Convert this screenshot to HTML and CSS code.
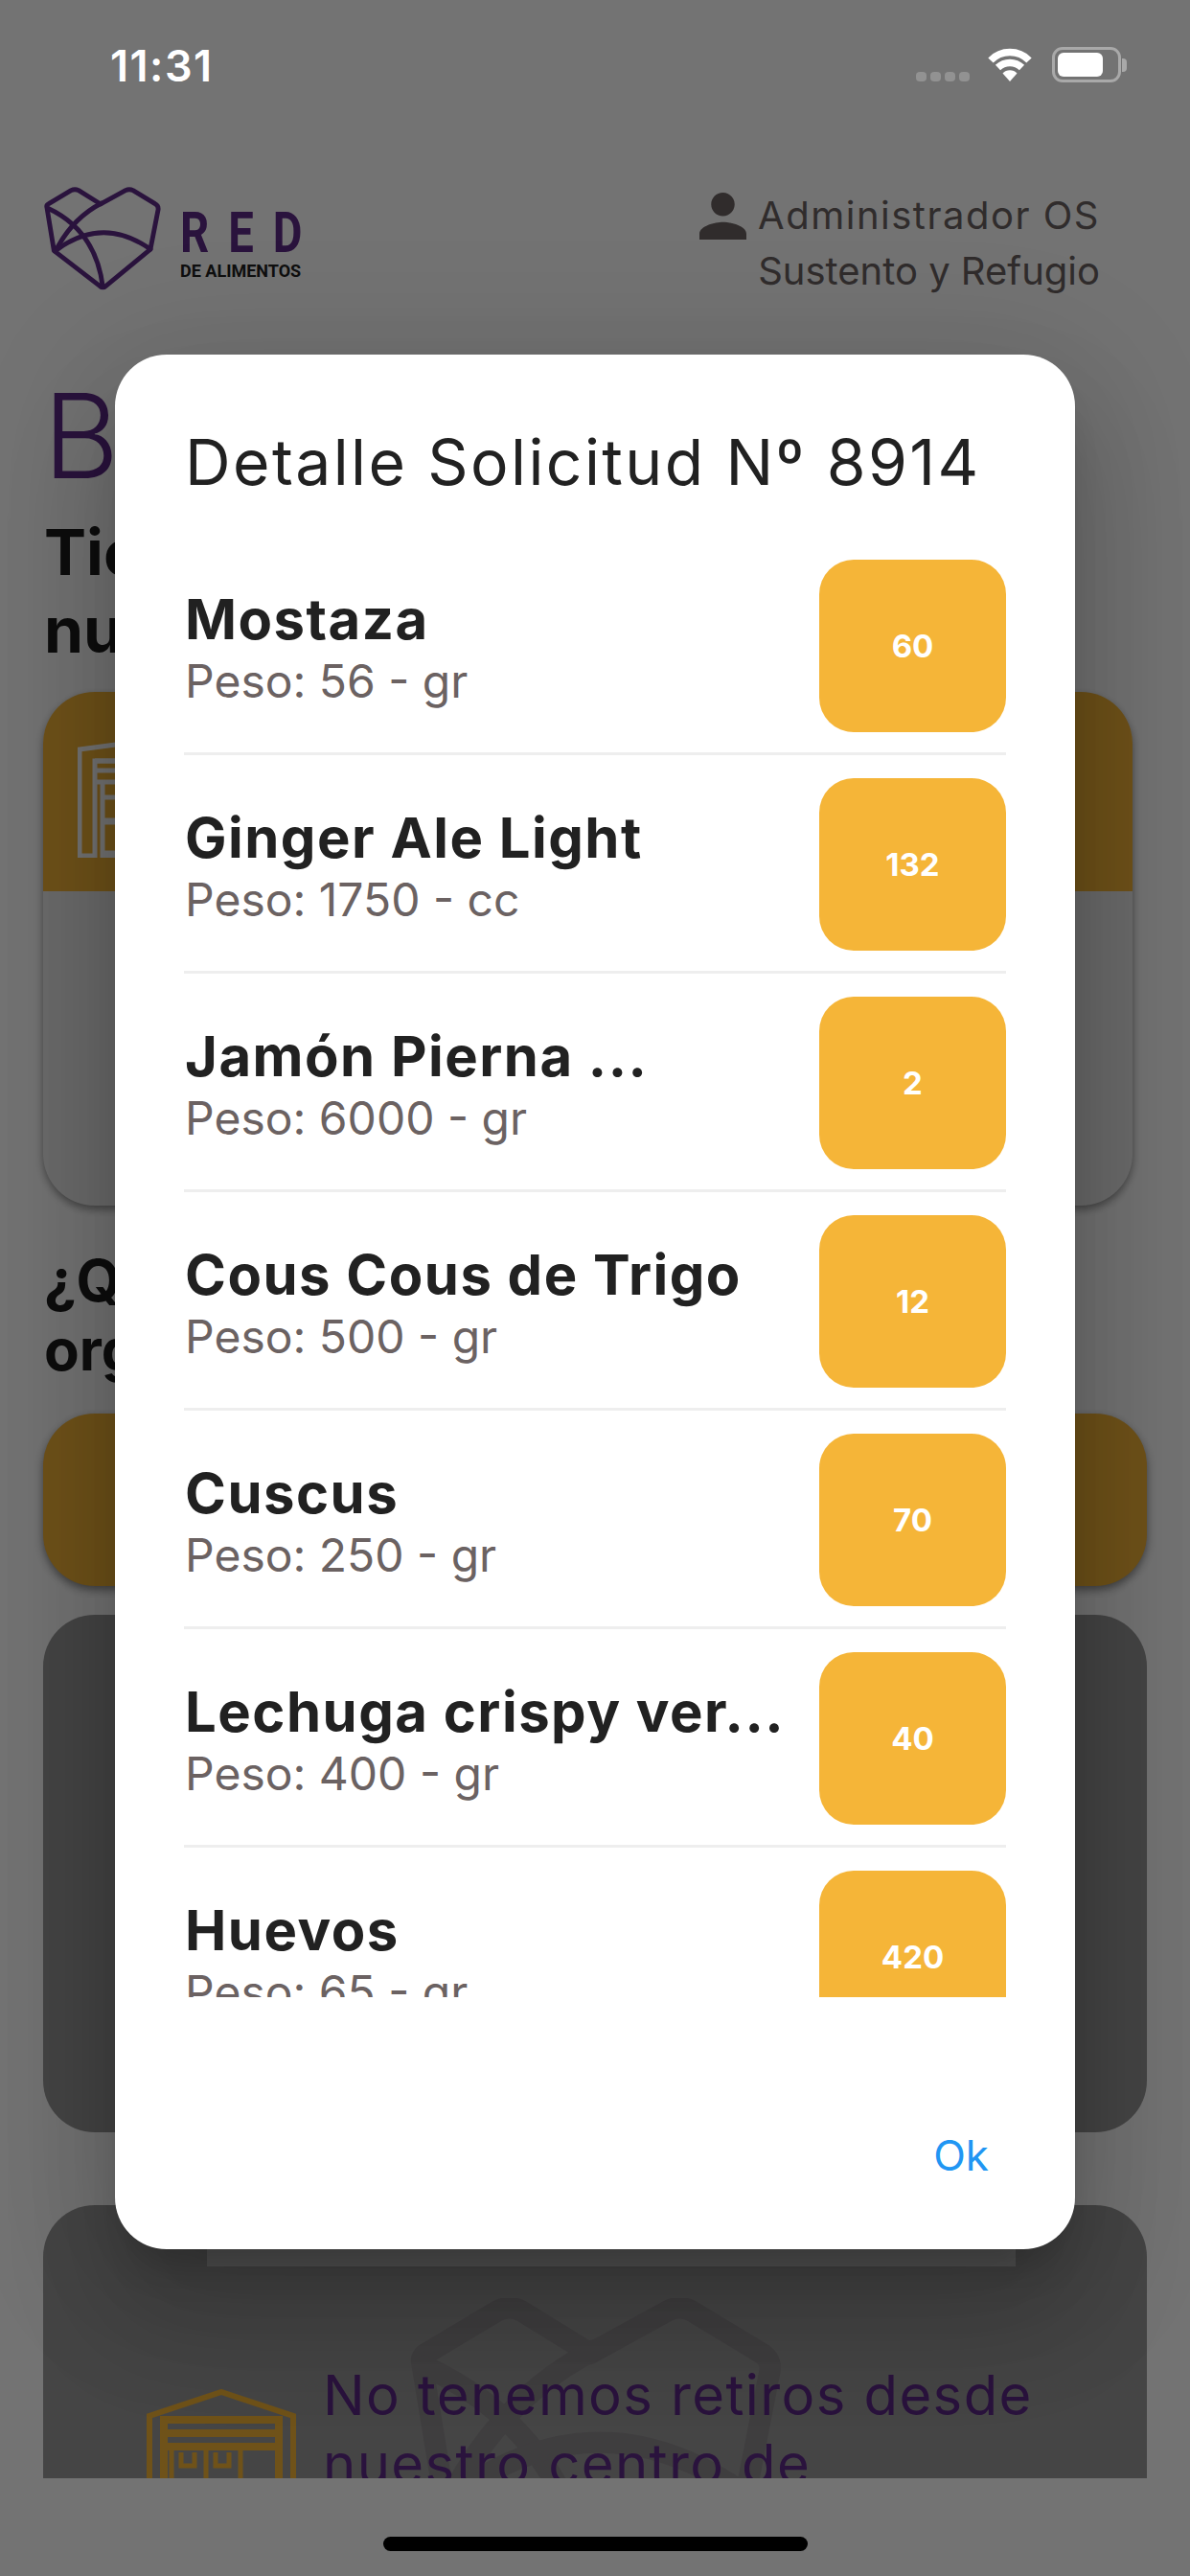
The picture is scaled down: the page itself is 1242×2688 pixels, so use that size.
FILE: index.html
```html
<!DOCTYPE html>
<html lang="es">
<head>
<meta charset="utf-8">
<title>Detalle Solicitud</title>
<link rel="stylesheet" href="styles.css">
</head>
<body>
<svg class="defs" width="0" height="0" aria-hidden="true">
  <symbol id="heart" viewBox="70 68 382 336">
    <path d="M82 135Q80 128 88 124L160 81Q172 75 184 81L255 125L335 81Q347 75 359 81L430 124Q441 130 440 142L415 270L272 388Q262 397 252 388L105 275Z"/>
    <path d="M258 122Q165 170 112 272"/>
    <path d="M85 138Q240 210 262 392"/>
    <path d="M108 276Q260 160 415 270"/>
  </symbol>
</svg>
<div class="phone">
  <div class="status">
    <span class="time">11:31</span>
    <div class="status-icons">
      <div class="signal"><i></i><i></i><i></i><i></i></div>
      <svg class="wifi" viewBox="0 0 46 36"><path d="M3 14A28 28 0 0 1 43 14" /><path d="M10.500 21.500A18 18 0 0 1 35.500 21.500"/><path class="wedge" d="M23 36L15.500 27.500A10.500 10.500 0 0 1 30.500 27.500Z"/></svg>
      <div class="battery"><div class="battery-fill"></div></div>
      <div class="battery-cap"></div>
    </div>
  </div>
  <header class="header">
    <div class="logo">
      <svg class="logo-heart"><use href="#heart"/></svg>
      <div class="logo-text">
        <div class="logo-red">RED</div>
        <div class="logo-sub">DE ALIMENTOS</div>
      </div>
    </div>
    <div class="user">
      <div class="user-top">
        <svg class="user-icon" viewBox="4 4 16 16"><path d="M12 12c2.210 0 4-1.790 4-4s-1.790-4-4-4-4 1.790-4 4 1.790 4 4 4zm0 2c-2.670 0-8 1.340-8 4v2h16v-2c0-2.660-5.330-4-8-4z"/></svg>
        <span>Administrador OS</span>
      </div>
      <div class="user-org">Sustento y Refugio</div>
    </div>
  </header>
  <main class="content">
    <h1 class="welcome">Bienvenido</h1>
    <p class="lead">Tienes<br>nuevos</p>
    <section class="ticket">
      <div class="ticket-head">
        <svg class="ticket-icon" viewBox="0 0 170 125">
          <path d="M2 123V12L85 1L168 12V123H150V24H18V123Z"/>
          <path d="M18 24H150M18 34H150M18 46H150"/>
          <path d="M26 46V123H144V46M26 62H60V86H26M26 88H60V120H26"/>
          <path d="M42 62V70H50V62M42 88V96H50V88"/>
        </svg>
      </div>
      <div class="ticket-body"></div>
    </section>
    <p class="lead-second">¿Qué<br>org</p>
    <div class="action"></div>
    <div class="panel"></div>
    <section class="center-card">
      <div class="center-photo"></div>
      <svg class="center-mark"><use href="#heart"/></svg>
      <div class="center-info">
        <svg class="center-icon" viewBox="0 0 156 160">
          <path class="thin" d="M3 155V28L78 3L153 28V155"/>
          <path class="fat" d="M18 32H138V155H18Z"/>
          <path class="fat" d="M18 46H138M18 60H138"/>
          <path class="band" d="M26 64V150M62 64V150M98 64V150M26 125H130"/>
          <path class="band" d="M36 66V80H50V66M72 66V80H86V66"/>
        </svg>
        <p class="center-text">No tenemos retiros desde nuestro centro de distribución</p>
      </div>
    </section>
  </main>
  <div class="home-row"><div class="home-bar"></div></div>
</div>
<div class="scrim"></div>
<div class="dialog">
  <h2 class="dialog-title">Detalle Solicitud Nº 8914</h2>
  <div class="list">
    <div class="row"><div class="row-text"><div class="name">Mostaza</div><div class="weight">Peso: 56 - gr</div></div><div class="qty">60</div></div>
    <div class="row"><div class="row-text"><div class="name">Ginger Ale Light</div><div class="weight">Peso: 1750 - cc</div></div><div class="qty">132</div></div>
    <div class="row"><div class="row-text"><div class="name">Jamón Pierna ...</div><div class="weight">Peso: 6000 - gr</div></div><div class="qty">2</div></div>
    <div class="row"><div class="row-text"><div class="name">Cous Cous de Trigo</div><div class="weight">Peso: 500 - gr</div></div><div class="qty">12</div></div>
    <div class="row"><div class="row-text"><div class="name">Cuscus</div><div class="weight">Peso: 250 - gr</div></div><div class="qty">70</div></div>
    <div class="row"><div class="row-text"><div class="name">Lechuga crispy ver...</div><div class="weight">Peso: 400 - gr</div></div><div class="qty">40</div></div>
    <div class="row"><div class="row-text"><div class="name">Huevos</div><div class="weight">Peso: 65 - gr</div></div><div class="qty">420</div></div>
  </div>
  <div class="dialog-actions"><span class="ok">Ok</span></div>
</div>
</body>
</html>
```
FILE: styles.css
```css
* { box-sizing: border-box; }
html, body { margin: 0; padding: 0; }
body {
  position: relative;
  width: 1242px;
  height: 2688px;
  overflow: hidden;
  background: #fff;
  font-family: Inter, "Noto Sans", sans-serif;
}
.defs { position: absolute; }
.phone { display: flex; flex-direction: column; height: 2688px; }

/* status bar */
.status {
  height: 120px;
  flex: none;
  display: flex;
  justify-content: space-between;
  padding: 42px 66px 0 115px;
}
.time { color: #fff; font-size: 45px; font-weight: 600; line-height: 54px; letter-spacing: 1.500px; position: relative; z-index: 3; }
.status-icons { display: flex; align-items: flex-start; height: 37px; margin-top: 7px; position: relative; z-index: 3; }
.signal { display: flex; gap: 4px; margin-top: 26px; margin-right: 19px; }
.signal i { width: 11px; height: 10px; border-radius: 4px; background: #929292; }
.wifi { width: 46px; height: 36px; margin-right: 21px; fill: none; stroke: #fff; stroke-width: 7.500; }
.wifi .wedge { fill: #fff; stroke: none; }
.battery { width: 72px; height: 37px; border: 3px solid #a9a9a9; border-radius: 11px; padding: 3px; }
.battery-fill { width: 47px; height: 100%; background: #fff; border-radius: 6px; }
.battery-cap { width: 5px; height: 14px; margin-top: 12px; margin-left: 1px; background: #a9a9a9; border-radius: 0 4px 4px 0; }

/* header */
.header {
  flex: none;
  height: 200px;
  display: flex;
  justify-content: space-between;
  padding: 74px 94px 0 45px;
}
.logo { display: flex; gap: 19px; }
.logo-heart { width: 124px; height: 110px; fill: none; stroke: #5e2a87; stroke-width: 15; stroke-linejoin: round; stroke-linecap: round; }
.logo-text { width: 130px; padding-top: 26px; }
.logo-red { font-family: Roboto, sans-serif; font-weight: 700; font-size: 59px; line-height: 46px; letter-spacing: 25px; color: #5e2a87; transform: scaleX(.8); transform-origin: left center; }
.logo-sub { font-family: Roboto, sans-serif; font-weight: 700; font-size: 18px; line-height: 20px; margin-top: 7px; color: #222; white-space: nowrap; }
.user { display: flex; flex-direction: column; align-items: flex-end; color: #6b6262; font-size: 40px; }
.user-top { display: flex; align-items: flex-start; gap: 12px; margin-top: 7px; line-height: 48px; letter-spacing: 1.500px; }
.user-icon { width: 49px; height: 49px; fill: #6b6262; }
.user-org { line-height: 48px; margin-top: 9px; }

/* content behind the dialog */
.content { flex: none; height: 2266px; overflow: hidden; padding: 0 45px; }
.welcome { margin: 70px 0 0; font-size: 122px; line-height: 130px; font-weight: 300; color: #5e2a87; white-space: nowrap; }
.lead { margin: 16px 0 0 1px; font-size: 66px; line-height: 81px; font-weight: 700; color: #1d1d1d; }
.ticket { margin: 24px 15px 0 0; height: 536px; border-radius: 54px; overflow: hidden; background: #eee; box-shadow: 0 4px 8px rgba(0,0,0,.4); }
.ticket-head { height: 208px; background: #f5b538; padding: 48px 0 0 36px; }
.ticket-icon { display: block; width: 170px; height: 125px; fill: none; stroke: #fff; stroke-width: 5; }
.lead-second { margin: 42px 0 0 1px; font-size: 60px; line-height: 72px; font-weight: 700; color: #1d1d1d; }
.action { margin-top: 31px; height: 180px; border-radius: 54px; background: #f5b538; box-shadow: 0 4px 10px rgba(0,0,0,.45); }
.panel { margin-top: 30px; height: 540px; border-radius: 54px; background: #9a9a9a; }
.center-card { position: relative; margin-top: 76px; height: 400px; border-radius: 54px 54px 0 0; overflow: hidden; background: #9a9a9a; }
.center-photo { margin: 0 137px 0 171px; height: 64px; background: #c0c0c0; }
.center-mark { position: absolute; left: 383px; top: 97px; width: 388px; height: 341px; fill: none; stroke: #8d898d; stroke-width: 22; stroke-linejoin: round; stroke-linecap: round; }
.center-info { position: relative; display: flex; align-items: flex-start; gap: 28px; padding: 98px 90px 0 108px; }
.center-icon { flex: none; width: 156px; height: 160px; margin-top: 30px; fill: none; stroke: #f5b538; }
.center-icon .thin { stroke-width: 6; }
.center-icon .fat { stroke-width: 8; }
.center-icon .band { stroke-width: 5; }
.center-text { margin: 0; font-size: 58px; line-height: 72px; color: #5e2a87; letter-spacing: 1.400px; }

/* home indicator */
.home-row { flex: none; padding-top: 61px; display: flex; justify-content: center; }
.home-bar { width: 443px; height: 15px; border-radius: 8px; background: #000; }

/* overlay */
.scrim { position: absolute; inset: 0; background: rgba(0,0,0,.55); }
.dialog {
  position: absolute;
  left: 120px;
  top: 370px;
  width: 1002px;
  height: 1977px;
  border-radius: 54px;
  background: #fff;
  display: flex;
  flex-direction: column;
  padding: 0 72px;
  box-shadow: 0 72px 114px 9px rgba(0,0,0,.14), 0 27px 138px 24px rgba(0,0,0,.12), 0 33px 45px -21px rgba(0,0,0,.2);
}
.dialog-title { margin: 70px 0 0 1px; height: 120px; font-size: 66px; line-height: 84px; font-weight: 400; color: #212121; letter-spacing: 2.400px; white-space: nowrap; }
.list { flex: none; height: 1524px; overflow: hidden; }
.row { height: 228px; padding: 24px 0 21px; border-bottom: 3px solid #eee; display: flex; justify-content: space-between; align-items: center; }
.row-text { min-width: 0; padding-top: 5px; }
.name { font-size: 58px; line-height: 64px; font-weight: 700; color: #212121; letter-spacing: 1.500px; white-space: nowrap; padding-left: 1px; }
.weight { font-size: 48px; line-height: 56px; margin-top: 5px; color: #6b6262; padding-left: 1px; }
.qty { flex: none; width: 195px; height: 180px; border-radius: 36px; background: #f5b538; color: #fff; font-size: 33px; font-weight: 700; display: flex; align-items: center; justify-content: center; }
.dialog-actions { display: flex; justify-content: flex-end; padding: 140px 18px 0 0; }
.ok { color: #2196f3; font-size: 44px; line-height: 50px; font-weight: 400; }
```
